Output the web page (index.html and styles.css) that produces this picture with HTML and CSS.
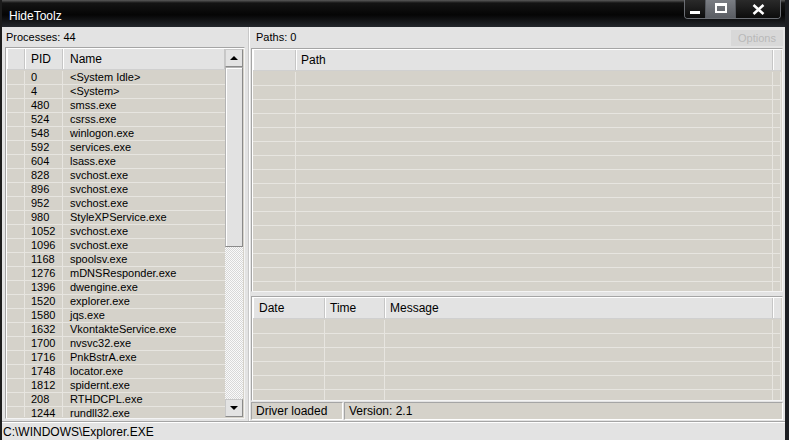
FILE: index.html
```html
<!DOCTYPE html>
<html lang="en">
<head>
    <meta charset="UTF-8">
    <title>HideToolz</title>
    <link rel="stylesheet" href="styles.css">
</head>
<body>
<div class="window">
    <div class="titlebar">
        <span class="title">HideToolz</span>
        <div class="caption-buttons">
            <span class="cbtn min"><span class="dash"></span></span>
            <span class="cbtn max"><span class="box"></span></span>
            <span class="cbtn close">
                <svg width="13" height="11" viewBox="0 0 13 11"><path d="M1.5 1 L11.5 10 M11.5 1 L1.5 10" stroke="#fff" stroke-width="2.6"/></svg>
            </span>
        </div>
    </div>

    <div class="client">
        <div class="main">
            <!-- processes -->
            <div class="left">
                <div class="label">Processes: 44</div>
                <div class="listbox proc">
                    <div class="listarea">
                        <div class="hdr">
                            <span class="c c-blank"></span>
                            <span class="c c-pid">PID</span>
                            <span class="c c-name">Name</span>
                        </div>
                        <div class="rows" id="proc-rows"></div>
                    </div>
                    <div class="scrollbar">
                        <span class="sbtn"><span class="arrow up"></span></span>
                        <span class="thumb"></span>
                        <span class="track"></span>
                        <span class="sbtn"><span class="arrow down"></span></span>
                    </div>
                </div>
            </div>

            <!-- paths + log -->
            <div class="right">
                <div class="toprow">
                    <span>Paths: 0</span>
                    <span class="options">Options</span>
                </div>
                <div class="listbox paths">
                    <div class="hdr">
                        <span class="c c-pblank"></span>
                        <span class="c c-path">Path</span>
                        <span class="c c-rest"></span>
                    </div>
                    <div class="rows" id="path-rows"></div>
                </div>
                <div class="listbox log">
                    <div class="hdr">
                        <span class="c c-date">Date</span>
                        <span class="c c-time">Time</span>
                        <span class="c c-msg">Message</span>
                        <span class="c c-rest"></span>
                    </div>
                    <div class="rows" id="log-rows"></div>
                </div>
                <div class="statusbar">
                    <span class="panel p1">Driver loaded</span>
                    <span class="panel p2">Version: 2.1</span>
                </div>
            </div>
        </div>
        <div class="pathedit">C:\WINDOWS\Explorer.EXE</div>
    </div>
</div>

<script>
    // lista de processos
    const procs = [
        ['0', '<System Idle>'], ['4', '<System>'], ['480', 'smss.exe'], ['524', 'csrss.exe'],
        ['548', 'winlogon.exe'], ['592', 'services.exe'], ['604', 'lsass.exe'], ['828', 'svchost.exe'],
        ['896', 'svchost.exe'], ['952', 'svchost.exe'], ['980', 'StyleXPService.exe'], ['1052', 'svchost.exe'],
        ['1096', 'svchost.exe'], ['1168', 'spoolsv.exe'], ['1276', 'mDNSResponder.exe'], ['1396', 'dwengine.exe'],
        ['1520', 'explorer.exe'], ['1580', 'jqs.exe'], ['1632', 'VkontakteService.exe'], ['1700', 'nvsvc32.exe'],
        ['1716', 'PnkBstrA.exe'], ['1748', 'locator.exe'], ['1812', 'spidernt.exe'], ['208', 'RTHDCPL.exe'],
        ['1244', 'rundll32.exe']
    ];

    const procRows = document.getElementById('proc-rows');
    procs.forEach(p => {
        const row = document.createElement('div');
        row.className = 'row';
        row.innerHTML = '<span class="c c-blank"></span><span class="c c-pid"></span><span class="c c-name"></span>';
        row.children[1].textContent = p[0];
        row.children[2].textContent = p[1];
        procRows.appendChild(row);
    });

    function emptyRows(id, cells, count) {
        const box = document.getElementById(id);
        for (let i = 0; i < count; i++) {
            const row = document.createElement('div');
            row.className = 'row';
            row.innerHTML = cells.map(c => '<span class="c ' + c + '"></span>').join('');
            box.appendChild(row);
        }
    }

    emptyRows('path-rows', ['c-pblank', 'c-path', 'c-rest'], 16);
    emptyRows('log-rows', ['c-date', 'c-time', 'c-msg', 'c-rest'], 6);
</script>
</body>
</html>
```

FILE: styles.css
```css
body {
    margin: 0;
    padding: 0;
    font-family: "Liberation Sans", Arial, sans-serif;
    font-size: 11px;
    color: #000;
    background: #000;
}

.window {
    width: 789px;
    height: 440px;
    display: flex;
    flex-direction: column;
    box-sizing: border-box;
    border-left: 2px solid #1c1c1c;
    border-right: 4px solid #1c1e22;
    background: #e3e3e3;
    overflow: hidden;
}

/* barra de titulo */
.titlebar {
    height: 27px;
    flex: none;
    display: flex;
    align-items: flex-start;
    justify-content: space-between;
    background: linear-gradient(#5a5a5a 0, #141414 3px, #050505 55%, #24272c 100%);
    margin: 0 -4px 0 -2px;
}

.title {
    color: #fff;
    font-size: 12px;
    margin: 9px 0 0 9px;
}

.caption-buttons {
    display: flex;
    margin-right: 8px;
    height: 18px;
    border: 1px solid #6b6e74;
    border-top: none;
    border-radius: 0 0 4px 4px;
    overflow: hidden;
}

.cbtn {
    display: flex;
    align-items: center;
    justify-content: center;
    height: 18px;
    background: linear-gradient(#2a2a2a, #0c0c0c);
}

.cbtn.min {
    width: 20px;
    border-right: 1px solid #55585e;
}

.cbtn.max {
    width: 29px;
    background: linear-gradient(#7a7d83, #5a5d63);
    border-right: 1px solid #55585e;
}

.cbtn.close {
    width: 44px;
}

.dash {
    width: 10px;
    height: 3px;
    background: #fff;
    margin-top: 6px;
}

.box {
    width: 8px;
    height: 5px;
    border: 2px solid #fff;
    border-top-width: 3px;
    margin-top: -2px;
}

/* area do cliente */
.client {
    flex: 1;
    display: flex;
    flex-direction: column;
}

.main {
    height: 394px;
    display: flex;
}

.left {
    width: 240px;
    padding: 0 3px 0 3px;
    display: flex;
    flex-direction: column;
    border-right: 1px solid #c8c8c8;
    box-shadow: 1px 0 0 #fff;
}

.label {
    height: 20px;
    line-height: 20px;
    padding-left: 1px;
}

.listbox {
    box-sizing: border-box;
    border: 1px solid #a5a5a5;
    border-right-color: #f4f4f4;
    border-bottom-color: #f4f4f4;
    box-shadow: inset 1px 1px 0 #fff;
    padding: 1px;
    background: #d5d2ca;
    overflow: hidden;
}

.listbox.proc {
    height: 372px;
    display: flex;
}

.listarea {
    flex: 1;
    overflow: hidden;
}

.hdr {
    display: flex;
    height: 20px;
    background: #e3e3e3;
    border-bottom: 1px solid #d0d0d0;
    margin-bottom: 1px;
}

.hdr .c {
    line-height: 20px;
    border-right: 1px solid #c6c6c6;
    box-shadow: inset 1px 0 0 #fff;
    box-sizing: border-box;
    font-size: 12px;
}

.row {
    display: flex;
    height: 14px;
    border-bottom: 1px solid #e7e5e0;
    box-sizing: border-box;
}

.row .c {
    line-height: 13px;
    border-right: 1px solid #e7e5e0;
    box-sizing: border-box;
    white-space: nowrap;
    overflow: hidden;
}

.c-blank { width: 18px; flex: none; }
.c-pid { width: 38px; flex: none; padding-left: 6px; }
.c-name { flex: 1; padding-left: 7px; }
.row .c-name { border-right: none; }

/* barra de rolagem */
.scrollbar {
    width: 18px;
    display: flex;
    flex-direction: column;
    background: #e8e8e8;
}

.sbtn {
    height: 18px;
    flex: none;
    box-sizing: border-box;
    border: 1px solid #c8c8c8;
    border-right-color: #8a8a8a;
    border-bottom-color: #8a8a8a;
    background: #e3e3e3;
    display: flex;
    align-items: center;
    justify-content: center;
}

.arrow {
    width: 0;
    height: 0;
    border-left: 4px solid transparent;
    border-right: 4px solid transparent;
}

.arrow.up { border-bottom: 4px solid #000; }
.arrow.down { border-top: 4px solid #000; }

.thumb {
    height: 180px;
    flex: none;
    box-sizing: border-box;
    border: 1px solid #b4b4b4;
    border-right-color: #8a8a8a;
    border-bottom-color: #8a8a8a;
    background: #e2e2e2;
    box-shadow: inset 1px 1px 0 #fff;
}

.track {
    flex: 1;
    background: repeating-conic-gradient(#fafafa 0 25%, #d8d8d8 0 50%) 0 0 / 2px 2px;
}

/* lado direito */
.right {
    flex: 1;
    display: flex;
    flex-direction: column;
    padding: 0 2px 0 2px;
}

.toprow {
    height: 21px;
    display: flex;
    justify-content: space-between;
    align-items: flex-start;
}

.toprow span:first-child {
    margin: 4px 0 0 5px;
}

.options {
    margin-top: 3px;
    width: 52px;
    height: 16px;
    line-height: 16px;
    text-align: center;
    background: #d8d8d8;
    color: #b8b8b8;
}

.listbox.paths {
    height: 244px;
    margin-bottom: 4px;
}

.c-pblank { width: 43px; flex: none; }
.c-path { width: 477px; flex: none; padding-left: 5px; }
.c-rest { flex: 1; }

.listbox.log {
    height: 105px;
    margin-bottom: 1px;
}

.c-date { width: 72px; flex: none; padding-left: 6px; }
.c-time { width: 60px; flex: none; padding-left: 5px; }
.c-msg { width: 388px; flex: none; padding-left: 5px; }

.listbox .hdr .c-rest { border-right: none; }

/* barra de status */
.statusbar {
    height: 18px;
    display: flex;
    gap: 1px;
}

.panel {
    box-sizing: border-box;
    height: 18px;
    line-height: 16px;
    padding-left: 4px;
    font-size: 12px;
    background: #d5d2ca;
    border: 1px solid #a5a5a5;
    border-right-color: #fff;
    border-bottom-color: #fff;
}

.p1 { width: 92px; }
.p2 { flex: 1; }

.pathedit {
    flex: 1;
    border-top: 1px solid #a5a5a5;
    box-shadow: inset 0 1px 0 #fff;
    padding: 3px 0 0 1px;
    font-size: 12px;
}
```
